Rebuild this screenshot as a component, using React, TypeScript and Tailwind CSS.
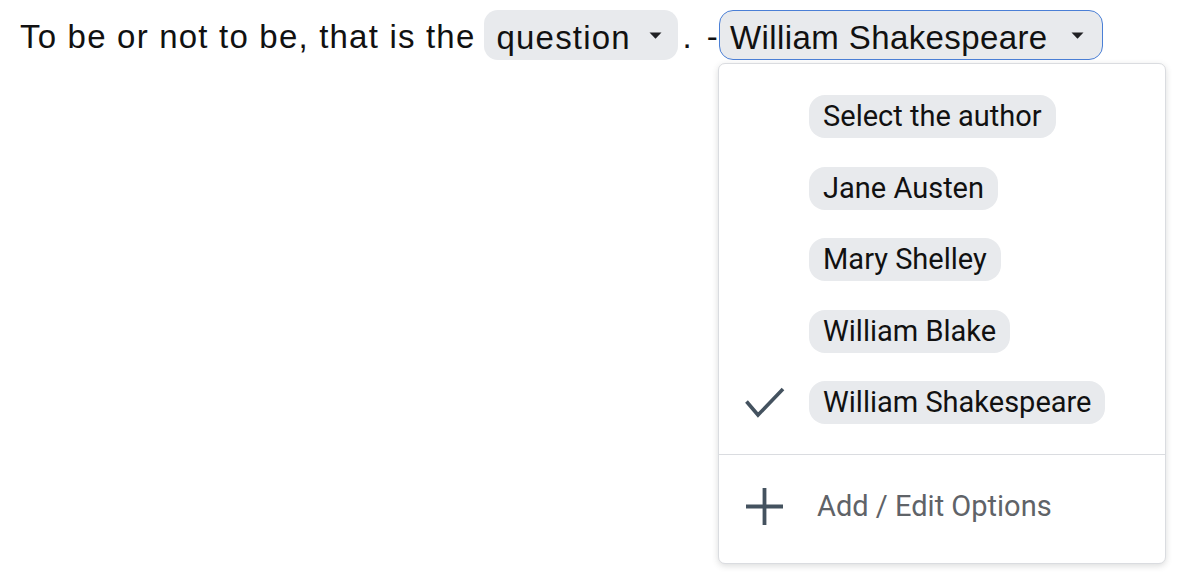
import React from 'react';

// ------------------ dados ------------------

const authors = [
  'Select the author',
  'Jane Austen',
  'Mary Shelley',
  'William Blake',
  'William Shakespeare',
];

const selected = 'William Shakespeare';

// ------------------ ícones ------------------

const Caret: React.FC = () => (
  <svg width="13" height="7" viewBox="0 0 13 7" className="shrink-0">
    <path d="M0.5 0.5h12L6.5 6.8z" fill="#202124" />
  </svg>
);

const CheckIcon: React.FC = () => (
  <svg width="40" height="34" viewBox="0 0 40 34">
    <path
      d="M1.5 15.5 13 29 38 3"
      fill="none"
      stroke="#44525f"
      strokeWidth="3.6"
      strokeLinecap="butt"
      strokeLinejoin="miter"
    />
  </svg>
);

const PlusIcon: React.FC = () => (
  <svg width="40" height="40" viewBox="0 0 40 40">
    <path d="M1 19.5h37M19.5 1v37" fill="none" stroke="#44525f" strokeWidth="3.8" />
  </svg>
);

// ------------------ componente ------------------

const App: React.FC = () => {
  return (
    <div className="h-[585px] w-[1200px] overflow-hidden bg-white">
      <div
        className="flex items-center pl-[20px] pt-[10px] text-[33px] tracking-[1.2px] text-[#111]"
        style={{ fontFamily: '"Liberation Sans", Arial, sans-serif' }}
      >
        <span className="pt-[4px] leading-[46px]">To be or not to be, that is the</span>

        {/* chip "question" */}
        <span className="ml-[9px] flex h-[50px] w-[194px] items-center justify-between rounded-[14px] bg-[#e8eaed] pl-[12px] pr-[16px] leading-none">
          <span className="pt-[4px]">question</span>
          <Caret />
        </span>

        <span className="ml-[4px] pt-[4px] leading-[46px]">.</span>
        <span className="ml-[14px] pt-[4px] leading-[46px]">-</span>

        {/* chip do autor + menu */}
        <div className="relative">
          <span className="flex h-[50px] w-[384px] items-center justify-between rounded-[14px] border-[1.5px] border-[#4a7fd6] bg-[#e8eaed] pl-[10px] pr-[18px] leading-none">
            <span className="pt-[4px] tracking-[0.4px]">William Shakespeare</span>
            <Caret />
          </span>

          <div
            className="absolute left-[-1px] top-[53px] h-[501px] w-[448px] rounded-[7px] border border-[#dadce0] bg-white tracking-normal shadow-[0_2px_6px_rgba(60,64,67,0.18)]"
            style={{ fontFamily: 'Roboto, "Noto Sans", sans-serif' }}
          >
            <div className="pt-[17px]">
              {authors.map((a) => (
                <div key={a} className="flex h-[71.5px] items-center pl-[26px]">
                  <span className="flex w-[64px] items-center">
                    {a === selected && <CheckIcon />}
                  </span>
                  <span className="rounded-[16px] bg-[#e8eaed] px-[14px] text-[29px] leading-[43px] text-[#111]">
                    {a}
                  </span>
                </div>
              ))}
            </div>

            <div className="mt-[15px] border-t border-[#dadce0]" />

            <div className="flex h-[104px] items-center pl-[26px]">
              <span className="flex w-[72px] items-center">
                <PlusIcon />
              </span>
              <span className="text-[29px] leading-none text-[#5f6368]">Add / Edit Options</span>
            </div>
          </div>
        </div>
      </div>
    </div>
  );
};

export default App;
